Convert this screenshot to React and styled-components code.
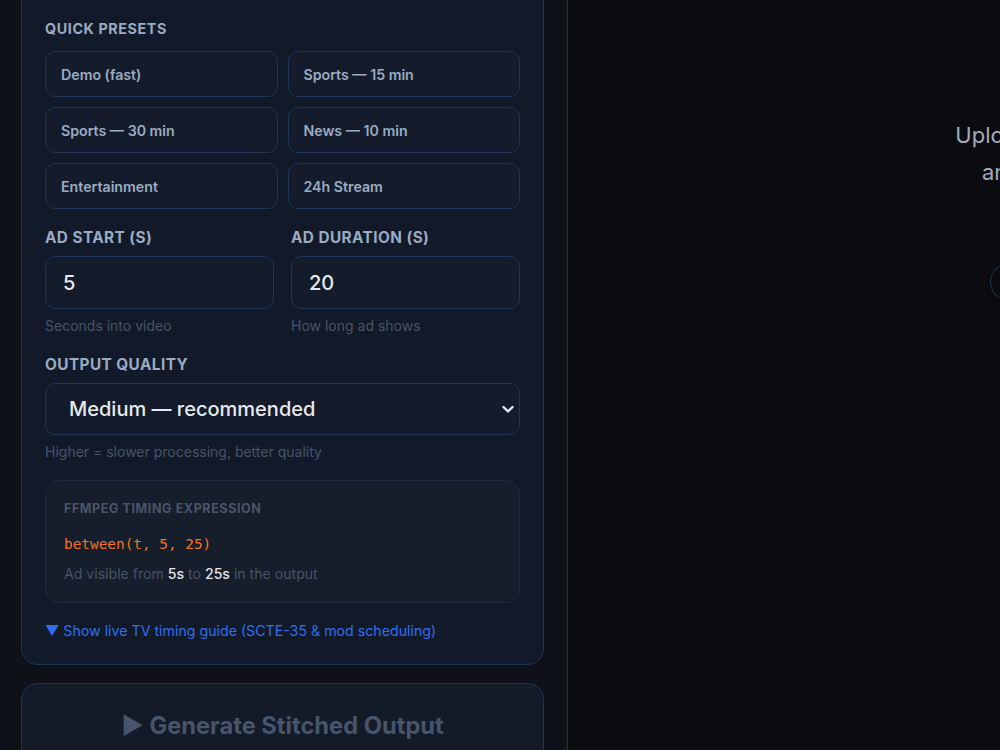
import styled, { createGlobalStyle } from "styled-components";

const GlobalStyle = createGlobalStyle`
  html, body {
    margin: 0;
    padding: 0;
    background: #0a0c10;
    overflow: hidden;
    font-family: Inter, "Noto Sans", sans-serif;
  }
  * { box-sizing: border-box; }
`;

const Page = styled.div`
  display: flex;
  width: 100vw;
  height: 100vh;
  overflow: hidden;
`;

const Sidebar = styled.aside`
  flex: 0 0 568px;
  height: 100vh;
  background: #0e1117;
  border-right: 1px solid #1c3556;
  padding: 0 23px 0 21px;
  display: flex;
  flex-direction: column;
  gap: 18px;
  overflow: hidden;
`;

const Card = styled.section`
  background: #121a29;
  border: 1px solid #1d3556;
  border-radius: 16px;
  padding: 24px 23px 23px 23px;
  margin-top: ${(p) => (p.$first ? "-24px" : "0")};
  padding-top: ${(p) => (p.$first ? "42px" : "24px")};
`;

const SectionLabel = styled.div`
  font-size: ${(p) => (p.$small ? "14.3px" : "15.3px")};
  font-weight: 700;
  letter-spacing: ${(p) => (p.$small ? "0.6px" : "0.45px")};
  text-transform: uppercase;
  color: #9aabc2;
  line-height: 20px;
  margin-bottom: ${(p) => (p.$small ? "12px" : "8px")};
`;

const PresetGrid = styled.div`
  display: grid;
  grid-template-columns: 1fr 1fr;
  gap: 10px;
`;

const PresetButton = styled.button`
  height: 46px;
  background: #141c2b;
  border: 1px solid #1d3556;
  border-radius: 10px;
  padding: 0 15px;
  text-align: left;
  font-family: inherit;
  font-size: 14.2px;
  font-weight: 600;
  color: #9aabc2;
  cursor: pointer;
`;

const FieldRow = styled.div`
  display: grid;
  grid-template-columns: 1fr 1fr;
  gap: 17px;
  margin-top: 19px;
`;

const Field = styled.div`
  display: flex;
  flex-direction: column;
  margin-top: ${(p) => p.$top || "0"};
`;

const Input = styled.input`
  height: 53px;
  width: 100%;
  background: #141b2a;
  border: 1px solid #1d3556;
  border-radius: 10px;
  padding: 0 17px;
  font-family: inherit;
  font-size: 20px;
  font-weight: 500;
  color: #e6e9ef;
  outline: none;
`;

const Help = styled.div`
  margin-top: 7px;
  font-size: 14px;
  line-height: 20px;
  color: #475467;
`;

const SelectWrap = styled.div`
  position: relative;
`;

const Select = styled.select`
  appearance: none;
  -webkit-appearance: none;
  width: 100%;
  height: 52px;
  background: #141b2a;
  border: 1px solid #1d3556;
  border-radius: 10px;
  padding: 0 40px 0 23px;
  font-family: inherit;
  font-size: 20px;
  font-weight: 500;
  color: #e6e9ef;
  outline: none;
`;

const Chevron = styled.svg`
  position: absolute;
  right: 5px;
  top: 50%;
  transform: translateY(-50%);
  width: 14px;
  height: 14px;
  pointer-events: none;
`;

const TimingBox = styled.div`
  margin-top: 18px;
  background: #161d2b;
  border: 1px solid #1f2a3e;
  border-radius: 14px;
  padding: 18px 18px 18px;
`;

const TimingLabel = styled.div`
  font-size: 12.5px;
  font-weight: 700;
  letter-spacing: 0.6px;
  text-transform: uppercase;
  color: #4a5568;
  line-height: 20px;
`;

const Code = styled.div`
  margin-top: 15px;
  font-family: "DejaVu Sans Mono", "Liberation Mono", monospace;
  font-size: 14.4px;
  line-height: 20px;
  color: #f47322;
`;

const TimingDesc = styled.div`
  margin-top: 10px;
  font-size: 14.1px;
  line-height: 20px;
  color: #475467;

  b {
    font-weight: 500;
    color: #e3e8f0;
  }
`;

const GuideLink = styled.a`
  display: block;
  margin-top: 18px;
  font-size: 14.2px;
  line-height: 20px;
  color: #2f6ef0;
  cursor: pointer;
`;

const GenerateCard = styled.button`
  flex: 0 0 auto;
  height: 84px;
  background: #131a28;
  border: 1px solid #1d3556;
  border-radius: 16px;
  font-family: inherit;
  font-size: 23.7px;
  font-weight: 700;
  color: #46556b;
  cursor: not-allowed;
  padding: 0;
`;

const Main = styled.main`
  flex: 0 0 976px;
  display: flex;
  flex-direction: column;
  align-items: center;
  padding-top: 117px;
`;

const EmptyText = styled.p`
  margin: 0;
  font-size: 22px;
  line-height: 37px;
  color: #a3adbd;
  text-align: center;
`;

const PillButton = styled.button`
  margin-top: 72px;
  height: 38px;
  padding: 0 24px;
  background: transparent;
  border: 1px solid #1d3556;
  border-radius: 999px;
  font-family: inherit;
  font-size: 14px;
  color: #9aabc2;
`;

const presets = [
  "Demo (fast)",
  "Sports — 15 min",
  "Sports — 30 min",
  "News — 10 min",
  "Entertainment",
  "24h Stream",
];

export default function App() {
  return (
    <>
      <GlobalStyle />
      <Page>
        <Sidebar>
          <Card $first>
            <SectionLabel $small>Quick Presets</SectionLabel>
            <PresetGrid>
              {presets.map((p) => (
                <PresetButton key={p}>{p}</PresetButton>
              ))}
            </PresetGrid>

            <FieldRow>
              <Field>
                <SectionLabel>Ad Start (s)</SectionLabel>
                <Input defaultValue="5" />
                <Help>Seconds into video</Help>
              </Field>
              <Field>
                <SectionLabel>Ad Duration (s)</SectionLabel>
                <Input defaultValue="20" />
                <Help>How long ad shows</Help>
              </Field>
            </FieldRow>

            <Field $top="19px">
              <SectionLabel>Output Quality</SectionLabel>
              <SelectWrap>
                <Select defaultValue="medium">
                  <option value="low">Low — fastest</option>
                  <option value="medium">Medium — recommended</option>
                  <option value="high">High — best quality</option>
                </Select>
                <Chevron viewBox="0 0 14 14" fill="none">
                  <path d="M2.5 5l4.5 4.5L11.5 5" stroke="#e6e9ef" strokeWidth="2.4" strokeLinecap="round" strokeLinejoin="round" />
                </Chevron>
              </SelectWrap>
              <Help>Higher = slower processing, better quality</Help>
            </Field>

            <TimingBox>
              <TimingLabel>FFmpeg timing expression</TimingLabel>
              <Code>between(t, 5, 25)</Code>
              <TimingDesc>
                Ad visible from <b>5s</b> to <b>25s</b> in the output
              </TimingDesc>
            </TimingBox>

            <GuideLink>▼ Show live TV timing guide (SCTE-35 &amp; mod scheduling)</GuideLink>
          </Card>

          <GenerateCard disabled>▶ Generate Stitched Output</GenerateCard>
        </Sidebar>

        <Main>
          <EmptyText>
            Upload a video and
            <br />
            an ad to begin
          </EmptyText>
          <PillButton>Choose files</PillButton>
        </Main>
      </Page>
    </>
  );
}
